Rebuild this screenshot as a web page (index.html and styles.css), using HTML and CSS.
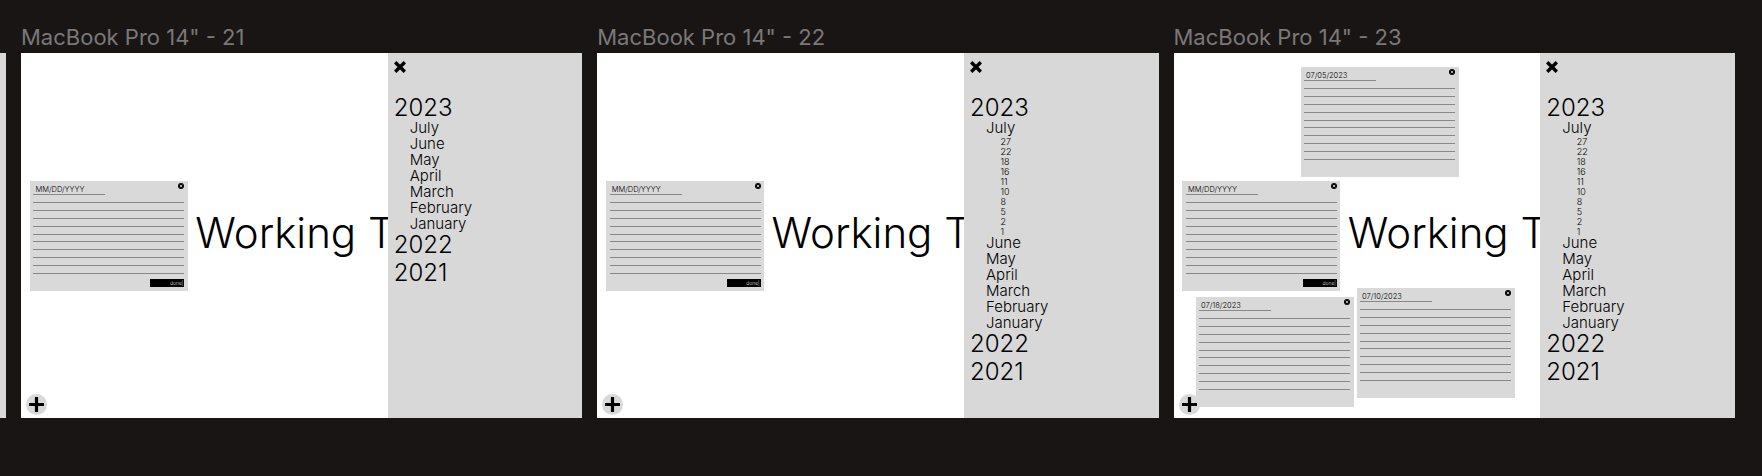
FILE: index.html
```html
<!DOCTYPE html>
<html lang="en">
<head>
<meta charset="utf-8">
<title>Working Title frames</title>
<link rel="stylesheet" href="styles.css">
</head>
<body>
<svg class="defs" width="0" height="0" aria-hidden="true">
  <symbol id="close" viewBox="0 0 12 12"><path d="M1.2 1.2 10.8 10.8M10.8 1.2 1.2 10.8" stroke="#000" stroke-width="3.4" fill="none"/></symbol>
  <symbol id="mini" viewBox="0 0 6 6"><circle cx="3" cy="3" r="3" fill="#000"/><path d="M1.8 1.8 4.2 4.2M4.2 1.8 1.8 4.2" stroke="#d9d9d9" stroke-width=".8"/></symbol>
  <symbol id="plus" viewBox="0 0 21 21"><circle cx="10.5" cy="10.5" r="10.5" fill="#d9d9d9"/><path d="M10.5 3V18M3 10.5H18" stroke="#000" stroke-width="3.2"/></symbol>
</svg>
<main class="canvas">
  <div class="stub"><div class="stub-fill"></div></div>

  <section class="frame">
    <h2 class="frame-label">MacBook Pro 14" - 21</h2>
    <div class="screen">
      <div class="stage">
        <p class="title">Working Title</p>
        <article class="note note-left">
          <svg class="note-close"><use href="#mini"/></svg>
          <div class="note-date">MM/DD/YYYY</div>
          <div class="note-lines"><i></i><i></i><i></i><i></i><i></i><i></i><i></i><i></i><i></i><i></i></div>
          <div class="note-done">done|</div>
        </article>
        <svg class="add"><use href="#plus"/></svg>
      </div>
      <aside class="side">
        <svg class="side-close"><use href="#close"/></svg>
        <div class="year">2023</div>
        <ul class="months">
          <li>July</li><li>June</li><li>May</li><li>April</li><li>March</li><li>February</li><li>January</li>
        </ul>
        <div class="year">2022</div>
        <div class="year">2021</div>
      </aside>
    </div>
  </section>

  <section class="frame">
    <h2 class="frame-label">MacBook Pro 14" - 22</h2>
    <div class="screen">
      <div class="stage">
        <p class="title">Working Title</p>
        <article class="note note-left">
          <svg class="note-close"><use href="#mini"/></svg>
          <div class="note-date">MM/DD/YYYY</div>
          <div class="note-lines"><i></i><i></i><i></i><i></i><i></i><i></i><i></i><i></i><i></i><i></i></div>
          <div class="note-done">done|</div>
        </article>
        <svg class="add"><use href="#plus"/></svg>
      </div>
      <aside class="side">
        <svg class="side-close"><use href="#close"/></svg>
        <div class="year">2023</div>
        <ul class="months">
          <li>July</li>
          <li class="days-wrap"><ul class="days"><li>27</li><li>22</li><li>18</li><li>16</li><li>11</li><li>10</li><li>8</li><li>5</li><li>2</li><li>1</li></ul></li>
          <li>June</li><li>May</li><li>April</li><li>March</li><li>February</li><li>January</li>
        </ul>
        <div class="year">2022</div>
        <div class="year">2021</div>
      </aside>
    </div>
  </section>

  <section class="frame">
    <h2 class="frame-label">MacBook Pro 14" - 23</h2>
    <div class="screen">
      <div class="stage">
        <p class="title">Working Title</p>
        <article class="note note-top">
          <svg class="note-close"><use href="#mini"/></svg>
          <div class="note-date">07/05/2023</div>
          <div class="note-lines"><i></i><i></i><i></i><i></i><i></i><i></i><i></i><i></i><i></i><i></i></div>
        </article>
        <article class="note note-left">
          <svg class="note-close"><use href="#mini"/></svg>
          <div class="note-date">MM/DD/YYYY</div>
          <div class="note-lines"><i></i><i></i><i></i><i></i><i></i><i></i><i></i><i></i><i></i><i></i></div>
          <div class="note-done">done|</div>
        </article>
        <article class="note note-low">
          <svg class="note-close"><use href="#mini"/></svg>
          <div class="note-date">07/18/2023</div>
          <div class="note-lines"><i></i><i></i><i></i><i></i><i></i><i></i><i></i><i></i><i></i><i></i></div>
        </article>
        <article class="note note-mid">
          <svg class="note-close"><use href="#mini"/></svg>
          <div class="note-date">07/10/2023</div>
          <div class="note-lines"><i></i><i></i><i></i><i></i><i></i><i></i><i></i><i></i><i></i><i></i></div>
        </article>
        <svg class="add"><use href="#plus"/></svg>
      </div>
      <aside class="side">
        <svg class="side-close"><use href="#close"/></svg>
        <div class="year">2023</div>
        <ul class="months">
          <li>July</li>
          <li class="days-wrap"><ul class="days"><li>27</li><li>22</li><li>18</li><li>16</li><li>11</li><li>10</li><li>8</li><li>5</li><li>2</li><li>1</li></ul></li>
          <li>June</li><li>May</li><li>April</li><li>March</li><li>February</li><li>January</li>
        </ul>
        <div class="year">2022</div>
        <div class="year">2021</div>
      </aside>
    </div>
  </section>
</main>
</body>
</html>
```
FILE: styles.css
```css
* { box-sizing: border-box; }
html, body { margin: 0; height: 100%; }
body {
  background: #191515;
  font-family: Inter, "Liberation Sans", sans-serif;
  color: #000;
  overflow: hidden;
}
.defs { position: absolute; }
.canvas {
  display: flex;
  gap: 15px;
  height: 476px;
}
.stub {
  width: 6px;
  padding-top: 53px;
  flex: none;
}
.stub-fill { height: 365px; background: #d9d9d9; }
.frame {
  width: 561.25px;
  flex: none;
}
.frame-label {
  margin: 0;
  height: 53px;
  padding-top: 25px;
  font-size: 22px;
  line-height: 24px;
  font-weight: 400;
  color: #7b7878;
  white-space: nowrap;
}
.screen {
  display: flex;
  height: 365px;
}
.stage {
  position: relative;
  flex: 1;
  min-width: 0;
  overflow: hidden;
  background: #fff;
}
.title {
  margin: 0;
  padding: 154px 0 0 174.3px;
  font-size: 42px;
  line-height: 51px;
  font-weight: 350;
  white-space: nowrap;
}
.add {
  position: absolute;
  left: 5px;
  top: 341px;
  width: 21px;
  height: 21px;
}
.note {
  position: absolute;
  width: 158px;
  height: 110px;
  padding: 3px 3.5px 0;
  background: #d9d9d9;
}
.note-left { left: 8.9px; top: 128px; }
.note-top { left: 127px; top: 14px; }
.note-low { left: 22px; top: 244px; }
.note-mid { left: 183px; top: 235px; }
.note-close {
  position: absolute;
  right: 3.5px;
  top: 2px;
  width: 6px;
  height: 6px;
}
.note-date {
  width: 72px;
  height: 11px;
  padding: 1px 0 0 2px;
  font-size: 7.5px;
  line-height: 10px;
  font-weight: 300;
  color: #000;
  border-bottom: 1px solid #888;
}
.note-lines {
  display: flex;
  flex-direction: column;
  gap: 6.9px;
  margin-top: 7px;
}
.note-lines i {
  display: block;
  height: 1px;
  background: #888;
}
.note-done {
  width: 34px;
  height: 8px;
  margin: 5px 0 0 auto;
  padding-right: 1px;
  background: #000;
  color: #ddd;
  font-size: 5px;
  line-height: 8px;
  font-weight: 300;
  text-align: right;
}
.side {
  flex: none;
  width: 194.5px;
  padding: 0 0 0 6px;
  background: #d8d8d8;
}
.side-close {
  display: block;
  width: 12px;
  height: 12px;
  margin-top: 8px;
}
.year {
  font-size: 24px;
  line-height: 28px;
  font-weight: 350;
}
.side-close + .year { margin-top: 21px; }
.months {
  list-style: none;
  margin: -2px 0 -1px;
  padding: 0 0 0 16px;
  font-size: 15px;
  line-height: 16px;
  font-weight: 350;
}
.days-wrap { height: 99px; }
.days {
  list-style: none;
  margin: 0;
  padding: 0.5px 0 0 14.5px;
  font-size: 9px;
  line-height: 10px;
  font-weight: 300;
}
```
